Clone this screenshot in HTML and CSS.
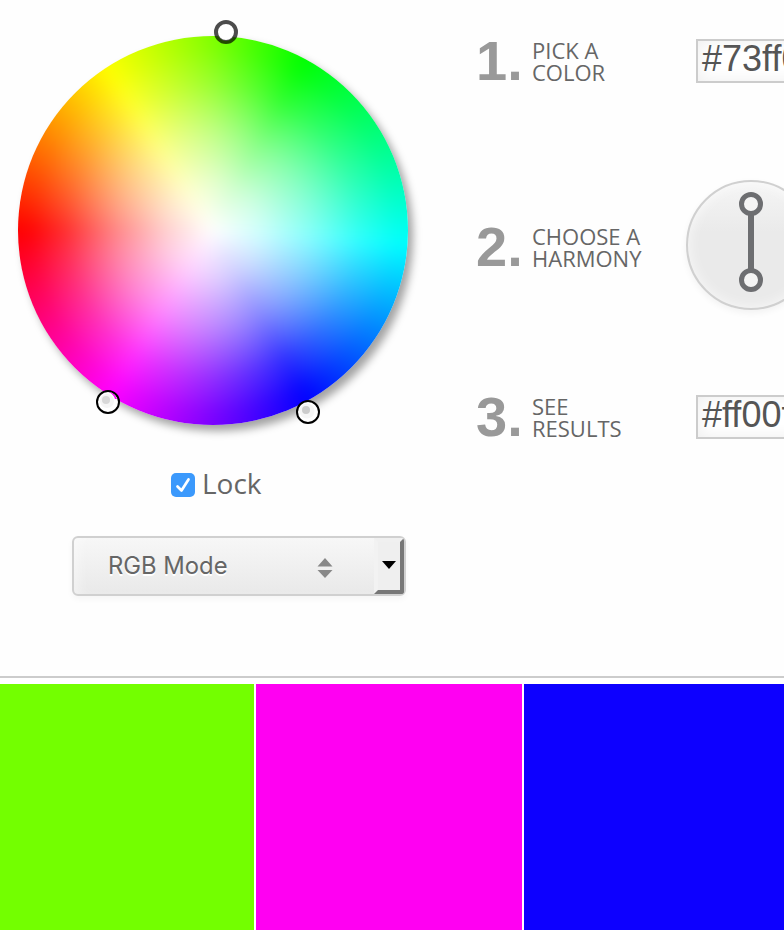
FILE: index.html
```html
<!DOCTYPE html>
<html lang="en">
<head>
<meta charset="utf-8">
<title>Color Calculator</title>
<link rel="stylesheet" href="styles.css">
</head>
<body>
<main class="workspace">
  <section class="picker">
    <div class="wheel">
      <div class="disc"></div>
      <svg class="pin pin-main" viewBox="0 0 24 24"><circle cx="12" cy="12" r="9" fill="#fff"/><circle cx="12" cy="12" r="10" fill="none" stroke="#000" stroke-opacity=".7" stroke-width="4"/></svg>
      <svg class="pin pin-magenta" viewBox="0 0 24 24"><circle cx="12" cy="12" r="11" fill="#fff" stroke="#000" stroke-width="2"/><path d="M13 2Q19 3 21 9L19 9Q18 5 13 2Z" fill="#f0f"/><circle cx="11" cy="11" r="7" fill="#f5f5f5"/><circle cx="10" cy="10" r="4" fill="#d8d8d8"/></svg>
      <svg class="pin pin-blue" viewBox="0 0 24 24"><circle cx="12" cy="12" r="11" fill="#fff" stroke="#000" stroke-width="2"/><circle cx="11" cy="11" r="7.500" fill="#f6f6f6"/><circle cx="10" cy="10" r="4" fill="#ccc"/></svg>
    </div>
    <label class="lock">
      <svg class="check" viewBox="0 0 24 24"><rect width="24" height="24" rx="5" fill="#3b99fc"/><path d="M6.500 13.500L10.500 17.500L17.500 6.500" fill="none" stroke="#fff" stroke-width="2.700" stroke-linecap="round" stroke-linejoin="round"/></svg>
      <span>Lock</span>
    </label>
    <div class="mode">
      <span class="mode-name">RGB Mode</span>
      <svg class="sort" viewBox="0 0 16 22"><path d="M8 1L15.500 9.500H.5ZM8 21L15.500 13H.5Z" fill="#888"/></svg>
      <span class="drop"><svg viewBox="0 0 14 8"><path d="M0 0H14L7 8Z"/></svg></span>
    </div>
  </section>
  <section class="steps">
    <div class="step step-pick">
      <b class="number">1.</b><span class="label">PICK A<br>COLOR</span>
      <div class="value">#73ff00</div>
    </div>
    <div class="step step-harmony">
      <b class="number">2.</b><span class="label">CHOOSE A<br>HARMONY</span>
      <div class="harmony"><svg viewBox="0 0 24 100"><path d="M12 20V80" stroke="#6d6e71" stroke-width="6"/><g fill="#f4f4f4" stroke="#6d6e71" stroke-width="5"><circle cx="12" cy="12" r="9.500"/><circle cx="12" cy="88" r="9.500"/></g></svg></div>
    </div>
    <div class="step step-result">
      <b class="number">3.</b><span class="label">SEE<br>RESULTS</span>
      <div class="value">#ff00f2</div>
    </div>
  </section>
</main>
<section class="swatches">
  <div class="swatch green"></div>
  <div class="swatch magenta"></div>
  <div class="swatch blue"></div>
</section>
</body>
</html>
```
FILE: styles.css
```css
* { box-sizing: border-box; }
body {
  margin: 0;
  height: 930px;
  overflow: hidden;
  background: #fefefe;
  color: #666;
  font-family: "Open Sans", sans-serif;
}
svg { display: block; }
.workspace {
  display: grid;
  grid-template-columns: 476px 308px;
  height: 676px;
}
.picker { padding: 36px 0 0 18px; }
.wheel {
  position: relative;
  width: 390px;
  height: 389px;
  border-radius: 50%;
  box-shadow: 5px 6px 8px rgba(0,0,0,.36);
}
.disc {
  display: grid;
  width: 100%;
  height: 100%;
  overflow: hidden;
  border-radius: 50%;
}
/* Softens the seams between hues; the negative margin keeps the rim crisp. */
.disc::before {
  content: "";
  margin: -30px;
  background:
    radial-gradient(circle 195px, #fff 0, rgba(255,255,255,.8) 25%, rgba(255,255,255,.52) 50%, rgba(255,255,255,.19) 75%, rgba(255,255,255,.02) 93%, rgba(255,255,255,0) 100%),
    conic-gradient(#80ff00, #0f0 28deg, #0ff 94deg, #00f 151deg, #f0f 212deg, #f00 270deg, #ff0 327deg, #80ff00);
  filter: blur(8px);
}
.pin { position: absolute; width: 24px; height: 24px; }
.pin-main { left: 196px; top: -16px; }
.pin-magenta { left: 78px; top: 354px; }
.pin-blue { left: 278px; top: 364px; }
.lock {
  display: flex;
  align-items: center;
  gap: 7px;
  height: 40px;
  margin: 40px 0 0 153px;
  font-size: 28px;
}
.check { width: 24px; height: 24px; }
.lock span { line-height: 40px; margin-top: -4px; }
.mode {
  display: flex;
  align-items: center;
  width: 334px;
  height: 60px;
  margin: 31px 0 0 54px;
  border: 2px solid #d0d0d0;
  border-radius: 6px;
  background: linear-gradient(#f7f7f7, #e9e9e9);
  box-shadow: inset 10px 0 12px -5px rgba(255,255,255,.4), 0 3px 6px rgba(0,0,0,.04);
}
.mode-name {
  width: 209px;
  padding-left: 34px;
  font: 23.800px/56px Inter, sans-serif;
  text-shadow: 0 2px 0 #fff;
}
.sort { flex: none; width: 16px; height: 22px; margin: 4px 41px 0 34px; }
.drop {
  flex: none;
  display: flex;
  align-items: center;
  justify-content: center;
  width: 30px;
  height: 56px;
  border: 4px solid;
  border-color: #f0f0f0 #777 #777 #f2f2f2;
  border-radius: 0 3px 3px 0;
  background: #efefef;
}
.drop svg { width: 14px; height: 8px; margin: -2px 1px 0 0; }
.step {
  display: grid;
  grid-template-columns: 56px 154px 88px;
  align-items: start;
}
.step-pick { padding-top: 39px; height: 180px; }
.step-harmony { height: 215px; }
.number {
  font: bold 56px/44px "Liberation Sans", sans-serif;
  color: #999;
}
.label { font-size: 22px; line-height: 22px; white-space: nowrap; }
.step-harmony .number { padding-top: 45px; }
.step-harmony .label { padding-top: 45px; }
.value {
  width: 160px;
  height: 44px;
  margin-left: 10px;
  padding-left: 4px;
  border: 2px solid #ccc;
  background: #fff;
  box-shadow: inset 0 0 16px #eee;
  color: #555;
  font: 36px/36px "Liberation Sans", sans-serif;
}
.harmony {
  width: 130px;
  height: 130px;
  padding: 10px 0 0 51px;
  border: 2px solid #d0d0d0;
  border-radius: 50%;
  background: linear-gradient(#f5f5f5, #eaeaea 40%, #eaeaea);
  box-shadow: inset 0 0 14px rgba(255,255,255,.7), 0 3px 7px rgba(0,0,0,.05);
}
.harmony svg { width: 24px; height: 100px; }
.swatches {
  display: grid;
  grid-template-columns: 254px 266px 260px;
  gap: 2px;
  height: 254px;
  padding-top: 6px;
  border-top: 2px solid #ccc;
  background: #fff;
}
.green { background: #73ff00; }
.magenta { background: #ff00f2; }
.blue { background: #0d00ff; }
```
